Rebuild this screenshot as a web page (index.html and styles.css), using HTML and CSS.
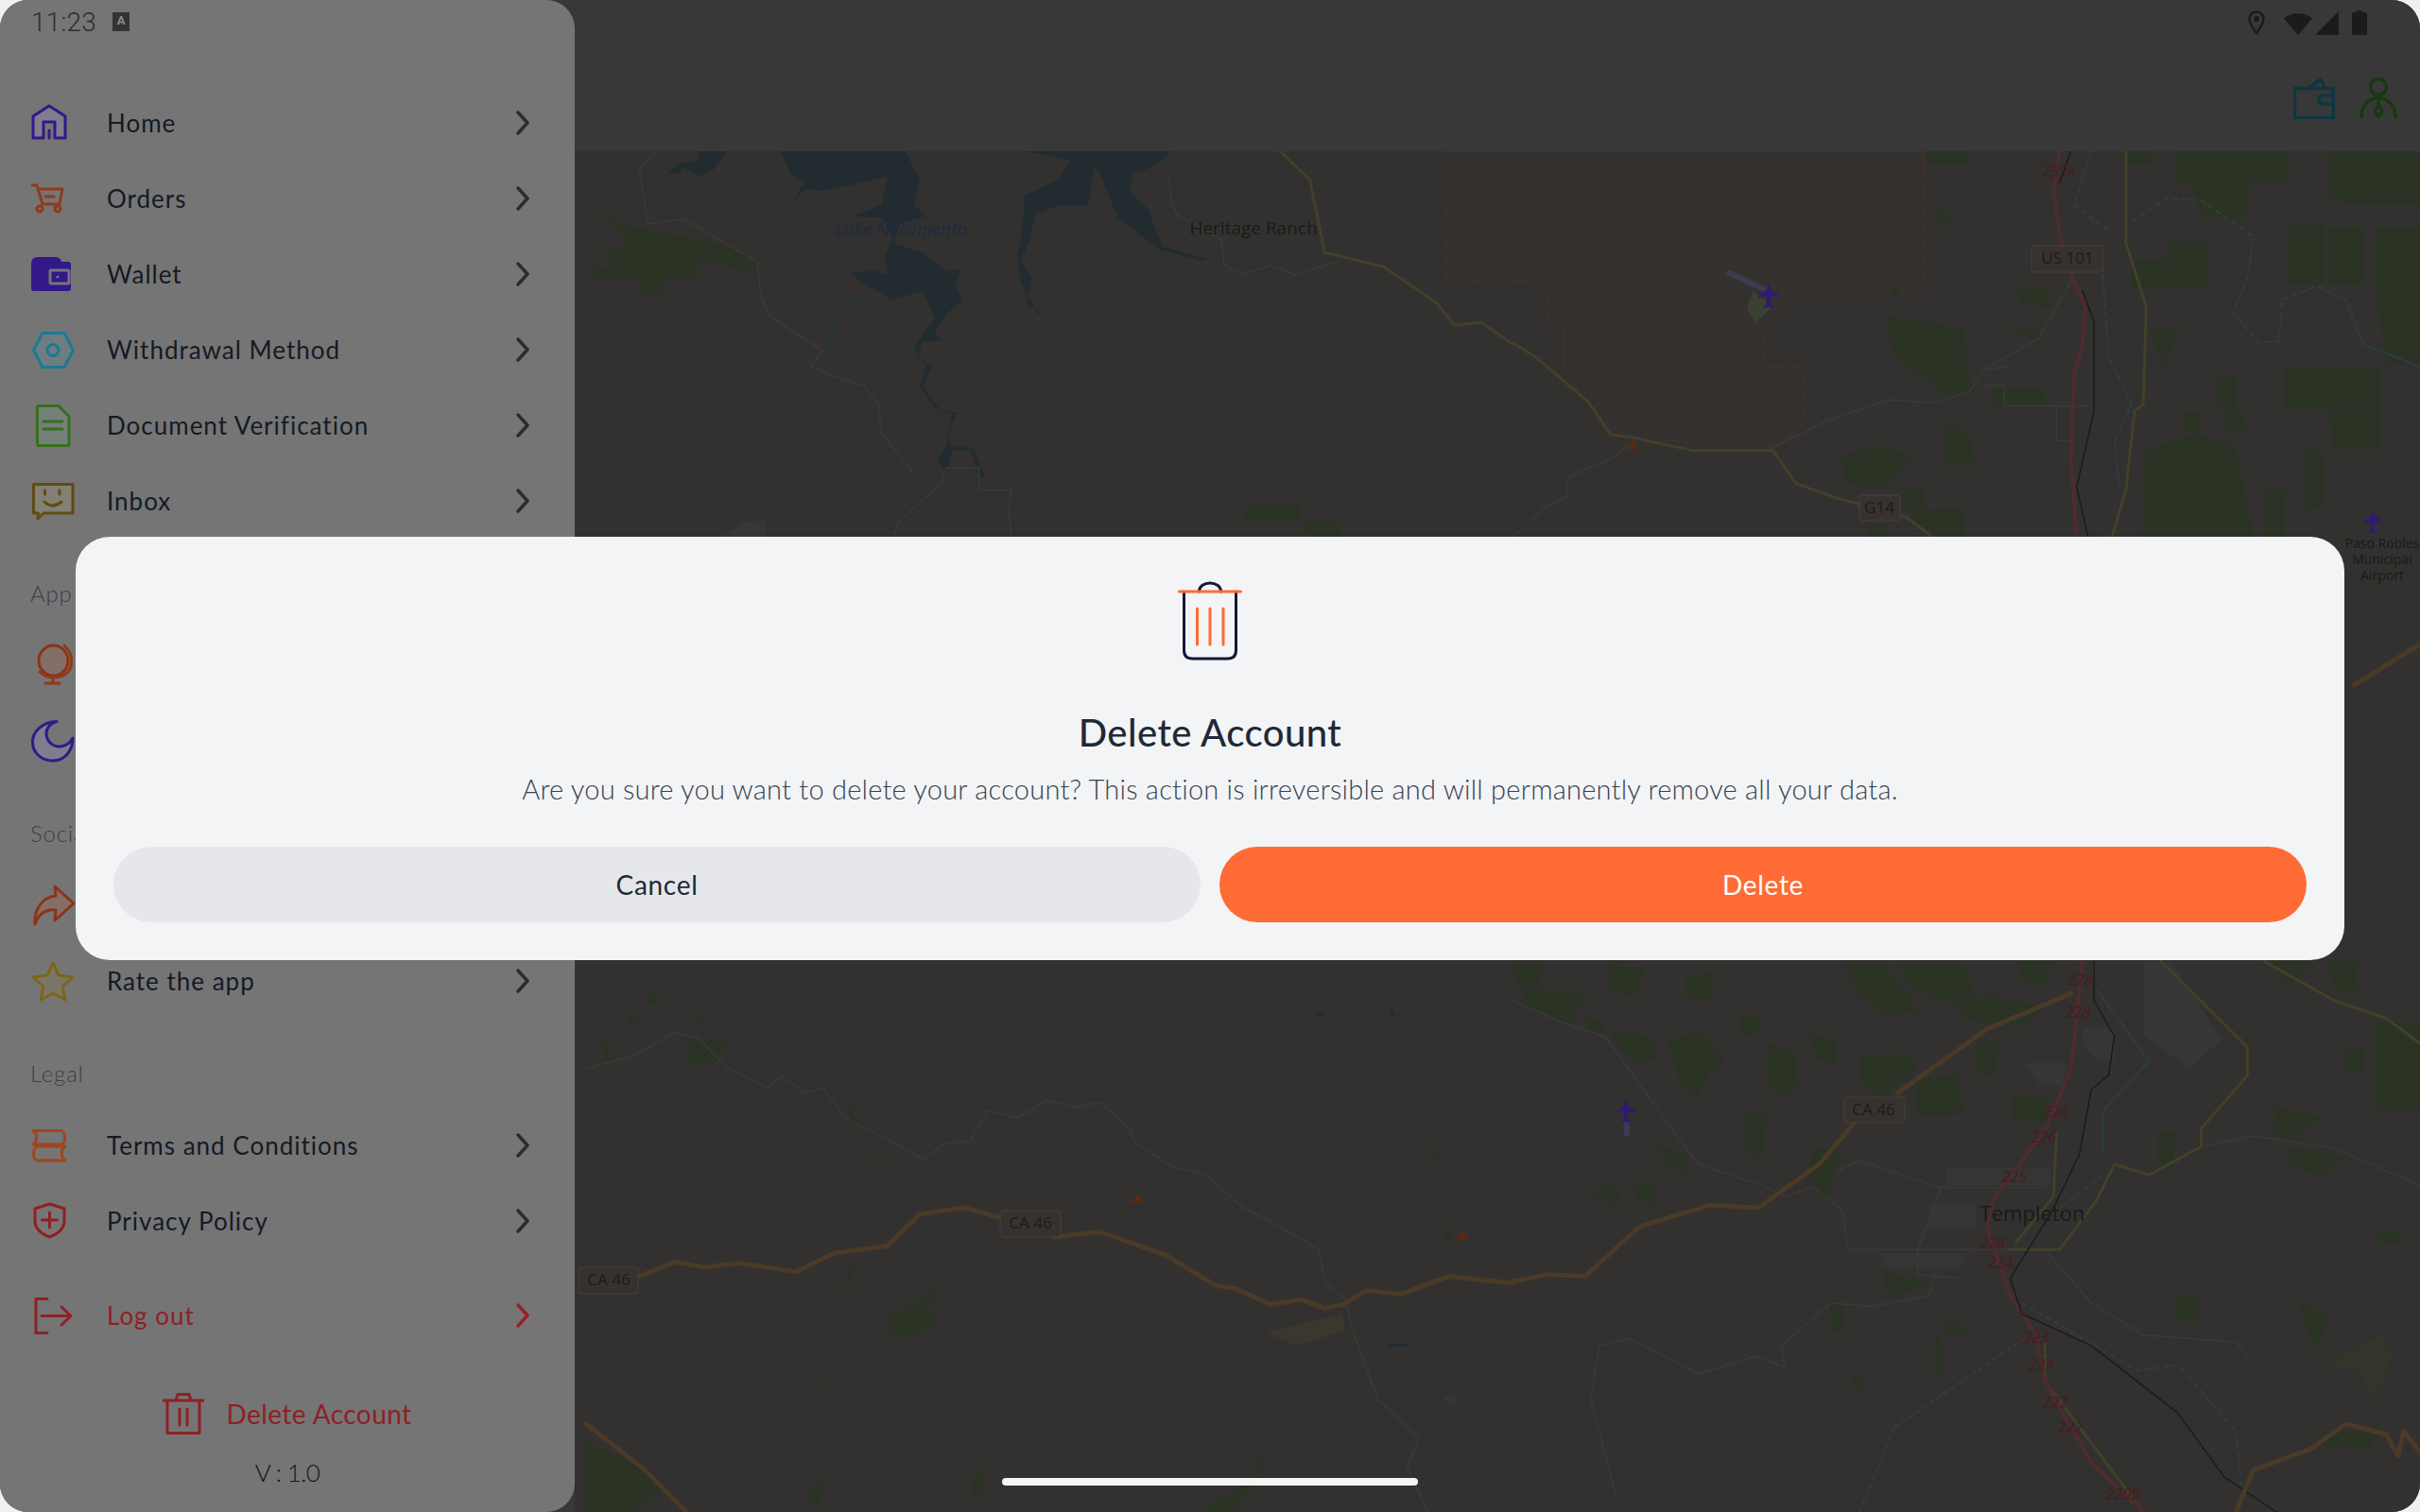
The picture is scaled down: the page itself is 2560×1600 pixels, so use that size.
FILE: index.html
```html
<!DOCTYPE html>
<html lang="en">
<head>
  <meta charset="UTF-8">
  <meta name="viewport" content="width=device-width, initial-scale=1.0">
  <title>Delete Account</title>
  <link rel="stylesheet" href="styles.css">
</head>
<body>
  <div class="screen">

    <aside class="drawer">
      <div class="status-left">
        <span class="clock">11:23</span>
        <span class="keyboard-badge">A</span>
      </div>

      <nav class="menu">
        <a class="row">
          <svg class="ico" viewBox="0 0 48 48"><path class="tint-purple" d="M3 40V17L20 6l17 11v23H26V23H14v17z"/><path class="st-purple" d="M20 32v8" stroke-width="4"/></svg>
          <span class="row-text">Home</span>
          <svg class="chev" viewBox="0 0 14 26"><path d="M2 2l10 11L2 24"/></svg>
        </a>
        <a class="row">
          <svg class="ico" viewBox="0 0 48 48"><path class="st-rust" d="M2 10h5l6 20h18l3-16H9M16 22h9"/><circle class="st-rust" cx="10" cy="35" r="3"/><circle class="st-rust" cx="29" cy="35" r="3"/></svg>
          <span class="row-text">Orders</span>
          <svg class="chev" viewBox="0 0 14 26"><path d="M2 2l10 11L2 24"/></svg>
        </a>
        <a class="row">
          <svg class="ico" viewBox="0 0 48 48"><path class="fill-purple" d="M1 13q0-7 7-7h18q6 0 7 5h7q3 0 3 3v25q0 3-3 3H4q-3 0-3-3z"/><rect class="st-grey" x="21" y="20" width="20" height="14" rx="1"/><circle class="dot-grey" cx="29" cy="27" r="1.6"/></svg>
          <span class="row-text">Wallet</span>
          <svg class="chev" viewBox="0 0 14 26"><path d="M2 2l10 11L2 24"/></svg>
        </a>
        <a class="row">
          <svg class="ico" viewBox="0 0 48 48"><path class="tint-teal" d="M3.500 24.500L13 6.500h23l9.500 18L36 42.500H13z"/><circle class="st-teal" cx="24" cy="24.500" r="6"/></svg>
          <span class="row-text">Withdrawal Method</span>
          <svg class="chev" viewBox="0 0 14 26"><path d="M2 2l10 11L2 24"/></svg>
        </a>
        <a class="row">
          <svg class="ico" viewBox="0 0 48 48"><path class="tint-green" d="M7.500 5q0-1.500 1.500-1.500h21L41 15v29q0 1.500-1.500 1.500H9q-1.500 0-1.500-1.500z"/><path class="st-green" d="M14 20h20M14 28h20"/></svg>
          <span class="row-text">Document Verification</span>
          <svg class="chev" viewBox="0 0 14 26"><path d="M2 2l10 11L2 24"/></svg>
        </a>
        <a class="row">
          <svg class="ico" viewBox="0 0 48 48"><path class="tint-olive" d="M3.500 6.500H45V37H14l-6 6 .5-6h-5z"/><path class="st-olive" d="M15.500 13v4M31 13v4M15 25q8.500 8 18 0"/></svg>
          <span class="row-text">Inbox</span>
          <svg class="chev" viewBox="0 0 14 26"><path d="M2 2l10 11L2 24"/></svg>
        </a>

        <p class="section-label">App Settings</p>
        <a class="row">
          <svg class="ico" viewBox="0 0 48 48"><ellipse class="tint-rust" cx="24.500" cy="19" rx="15.500" ry="16"/><path class="st-rust" d="M36 3c11 10 11 29-5 33-8 2-16 0-21-5M24 37v6M16 43h15"/></svg>
          <span class="row-text">Language</span>
          <svg class="chev" viewBox="0 0 14 26"><path d="M2 2l10 11L2 24"/></svg>
        </a>
        <a class="row">
          <svg class="ico" viewBox="0 0 48 48"><path class="tint-purple" d="M28 3.500C12 4 2.500 15 2.500 25c0 12 9.500 20 21.500 20s21-10 21-24c-3 6-9 9-14 9-8 0-14-6-14-14 0-6 5-11 11-12.500z"/></svg>
          <span class="row-text">Dark Mode</span>
          <svg class="chev" viewBox="0 0 14 26"><path d="M2 2l10 11L2 24"/></svg>
        </a>

        <p class="section-label">Social</p>
        <a class="row">
          <svg class="ico" viewBox="0 0 48 48"><path class="tint-rust" d="M26 4l20 18-20 18 1-11c-10-1-18 4-22 15-1-16 8-29 22-30z"/></svg>
          <span class="row-text">Share the app</span>
          <svg class="chev" viewBox="0 0 14 26"><path d="M2 2l10 11L2 24"/></svg>
        </a>
        <a class="row">
          <svg class="ico" viewBox="0 0 48 48"><path class="tint-gold" d="M24 5l6 13 15 2-11 10 3 14-13-7-13 7 3-14L3 20l15-2z"/></svg>
          <span class="row-text">Rate the app</span>
          <svg class="chev" viewBox="0 0 14 26"><path d="M2 2l10 11L2 24"/></svg>
        </a>

        <p class="section-label">Legal</p>
        <a class="row">
          <svg class="ico" viewBox="0 0 48 48"><path class="st-orange" d="M3 8.500h29c6 0 6 14.500 0 14.500H3c5-4 5-11 0-14.500zM37 25H8c-6 0-6 15 0 15h29c-5-4-5-11 0-15z"/></svg>
          <span class="row-text">Terms and Conditions</span>
          <svg class="chev" viewBox="0 0 14 26"><path d="M2 2l10 11L2 24"/></svg>
        </a>
        <a class="row">
          <svg class="ico" viewBox="0 0 48 48"><path class="st-red" d="M20.500 6L36 11v13c0 9-8 14-15.500 17C13 38 5 33 5 24V11zM20.500 15v16M12.500 23h16"/></svg>
          <span class="row-text">Privacy Policy</span>
          <svg class="chev" viewBox="0 0 14 26"><path d="M2 2l10 11L2 24"/></svg>
        </a>
        <a class="row row-logout">
          <svg class="ico" viewBox="0 0 48 48"><path class="st-red" d="M18 6.500H6v36h12M12 24.500h30M33 15l10 9.500L33 34"/></svg>
          <span class="row-text">Log out</span>
          <svg class="chev" viewBox="0 0 14 26"><path d="M2 2l10 11L2 24"/></svg>
        </a>
      </nav>

      <div class="drawer-foot">
        <div class="delete-link">
          <svg class="ico-trash" viewBox="0 0 44 44"><path class="st-red" d="M0 8h44M5 8v34.500h34V8M14 8l2-6.500h12L30 8M18 17v17M26 17v17"/></svg>
          <span>Delete Account</span>
        </div>
        <div class="version">V : 1.0</div>
      </div>
    </aside>

    <main class="content">
      <header class="appbar">
        <div class="status-right">
          <svg class="sys-pin" viewBox="0 0 18 26"><path d="M9 1.500c-4.200 0-7.500 3.300-7.500 7.500 0 5 7.500 15 7.500 15s7.500-10 7.500-15c0-4.200-3.300-7.500-7.500-7.500z"/><circle cx="9" cy="9" r="3"/></svg>
          <svg class="sys-wifi" viewBox="0 0 30 25"><path d="M0 7.500C8 .5 22 .5 30 7.500L15 25z"/></svg>
          <svg class="sys-signal" viewBox="0 0 25 25"><path d="M25 0v25H0z"/></svg>
          <svg class="sys-battery" viewBox="0 0 16 26"><path d="M5 0h6v2h3q2 0 2 2v20q0 2-2 2H2q-2 0-2-2V4q0-2 2-2h3z"/></svg>
        </div>
        <div class="appbar-actions">
          <svg class="act-wallet" viewBox="0 0 44 44"><path d="M1.500 11.500h41v31h-41zM16 11.500L29 2l5 9.500"/><path d="M42.500 19H31q-4 0-4 4.500T31 28h11.500"/></svg>
          <svg class="act-person" viewBox="0 0 40 44"><circle cx="20" cy="10" r="8.500"/><path d="M2 42c0-27 36-27 36 0M20 24v6M20 29l-4 7 4 5 4-5-4-7z"/></svg>
        </div>
      </header>

      <svg class="map" viewBox="608 160 1952 1440">
        <defs>
          <pattern id="hatch" width="10" height="10" patternUnits="userSpaceOnUse" patternTransform="rotate(-52)">
            <rect class="hatch-base" width="10" height="10"/>
            <path class="hatch-line" d="M0 5h10"/>
          </pattern>
          <symbol id="plane" viewBox="0 0 20 28">
            <path class="plane-path" d="M10 0l2 8 8 6v2l-8-2v8l3 3v1l-5-1-5 1v-1l3-3v-8l-8 2v-2l8-6z"/>
          </symbol>
        </defs>

        <path class="hatched" d="M1529 160H2036V305H1912L1865 347V388H1908V451L1875 473 1800 470 1701 458 1655 391V341H1638V299H1529z"/>

        <!-- north west: lake -->
        <g transform="translate(620 150) scale(.625 .335)">
          <path class="lake" d="M330 30H540L565 120 555 200 575 235 530 260 520 320 570 350 612 410 635 400 625 450 638 500 612 540 590 600 600 630 570 630 560 680 585 710 570 770 600 850 630 855 612 920 620 965 655 965 675 1060 665 1060 650 975 620 975 610 1050 595 1010 610 960 620 860 590 840 565 770 575 710 555 650 570 610 590 560 570 470 520 500 490 470 445 415 490 405 510 420 505 360 520 300 500 240 450 235 500 200 510 110 440 140 400 155 370 150 345 200 370 130 345 100z"/>
          <path class="lake" d="M745 30H990L960 80 925 100 920 160 950 210 975 330 1050 370 1045 376 970 340 900 240 870 100 860 80 850 200 800 200 760 230 750 320 735 370 755 430 745 510 770 540 765 545 735 440 730 370 742 220 740 170 800 120 820 60z"/>
          <path class="lake" d="M190 30H238L215 90 190 110 165 80 155 100 140 100 155 70 190 60z"/>
          <path class="brook" d="M480 480C440 510 420 530 425 570L412 660"/>
          <path class="wood" d="M25 230L60 260 100 280 130 290 200 310 250 340 290 390 275 410 220 380 180 380 190 430 130 430 125 480 100 480 85 430 10 430 15 400 50 400 30 350 70 320 60 290z"/>
          <path class="wood" d="M1110 1195L1125 1150 1210 1145 1205 1195 1270 1200 1278 1254H1225L1210 1195z"/>
          <path class="rock" d="M220 1254L270 1200 305 1195V1254z"/>
          <path class="trail" d="M115 35L90 90 105 260 165 245 240 325 290 380 295 480 310 550 400 660 380 710 410 735 470 770 495 830 500 920 560 1060M610 1030H665V1100H720L715 1150 720 1254M610 1030L600 1080 570 1130 530 1200 520 1254M985 100L990 180 1000 230 1075 310 1080 390 1110 420 1160 390 1200 420 1270 380"/>
          <path class="thin" d="M650 60L680 180 660 330 680 510 655 580 695 650 700 740 670 780 750 990 720 1100M340 100L330 220 380 350 430 480 410 560 430 680 360 780 410 830 430 920 470 1080 540 1130M1160 130L1170 200 1120 260 1080 300M1420 100L1410 300 1420 400"/>
          <path class="state" d="M1175 30L1225 120 1250 350 1350 395 1440 510 1470 580 1515 570 1568 640"/>
        </g>

        <!-- north east: farmland and the 101 -->
        <g transform="translate(1600 150) scale(.6122 .335)">
          <path class="wood" d="M1145 30H1340V130H1270V240H1190L1170 130H1145zM1410 30H1568V200H1470L1410 180zM1340 265H1400V450H1340zM1410 270H1470V450H1410zM1130 320H1200V460H1070V370H1130zM1490 270H1568V700H1510L1490 450zM1335 715H1500V970H1420L1410 845H1335zM1100 590H1150L1130 710 1110 640zM1220 740H1250V850H1220zM1155 850H1190V910H1160zM1230 850H1265V910H1235zM1090 980L1180 920 1250 970 1280 1250H1090zM1300 1100H1335V1250H1300zM1370 970H1400V1160H1370zM645 550L780 590 785 720 800 790 750 810 720 750 660 680zM570 990L640 960 690 1000 640 1090 575 1080zM750 880L790 930 800 1020 745 1025zM830 780H920V835H830zM865 455L925 460 930 530 900 510 880 510zM860 580L910 590 905 630zM680 1090H710V1160H780V1250H720L680 1160zM715 30H785V70H715zM735 200L765 265 735 260zM1065 30H1105V70H1065zM650 460H670L660 495zM615 1210H645V1254H615z"/>
          <path class="trail" d="M450 965L540 885 650 815 725 825 790 790 815 720 860 710M815 720L910 620 965 440M815 770H850V835H1000M940 840V945H965M0 1250L60 1150 95 1120 95 1060 170 1000 200 960"/>
          <path class="thin" d="M100 30L140 180 210 420 340 570H380V650L430 710 500 900M280 30L270 200 290 280 340 290 380 250M285 280V320L370 400 380 580M510 470V570H575V690L640 700V900M575 1000H720V1254M1060 850H1568M740 100L790 210 800 340 860 360"/>
          <path class="creek" d="M1070 250L1130 180 1190 185 1280 300 1270 430 1245 540 1290 635 1325 630 1330 500 1390 455 1440 500M1000 30L970 200 1030 280M1020 420L1030 680 1070 830 1040 950 1050 1100"/>
          <path class="river" d="M1440 500L1470 640 1568 710"/>
          <path class="state" d="M1060 30V320L1095 520 1090 830 1075 850 1060 1100 1035 1254M0 635L40 680 130 820 170 925 210 935 310 975H450L490 1080 560 1125 680 1185 730 1254"/>
          <path class="us" d="M945 30L935 150 945 290 965 420 990 520 985 640 970 740 965 1000 975 1254"/>
          <path class="rail" d="M965 30L945 130M985 470L1005 570V850L975 1090 995 1254"/>
          <path class="runway" d="M375 415L445 475"/>
          <path class="wood-soft" d="M415 470L450 520 420 570 405 530z"/>
          <path class="peak" d="M208 940L218 972H198z"/>
        </g>

        <!-- south middle: CA 46 -->
        <g transform="translate(620 1010) scale(.625 .3763)">
          <path class="wood" d="M0 1370L100 1450 130 1500 80 1568H0zM510 1030L540 1000 600 930 570 1000 600 1030 545 1080 515 1060zM435 920L460 860 445 925zM30 250H40V300H30zM70 160L95 195H75zM175 190L205 170 190 195zM175 240L240 240 215 310 175 310zM445 420L460 470 445 470zM490 585L505 545 495 590zM395 1195L425 1170 400 1200zM650 1500L670 1440 675 1490 655 1530zM1045 1568L1130 1470 1140 1400 1145 1470 1090 1568zM1450 770L1470 790 1455 810zM1430 540L1445 560 1435 575zM370 1520L400 1480 395 1560zM100 110H120V140H105z"/>
          <path class="farm" d="M1150 1065L1280 1010 1285 1060 1230 1085 1200 1098z"/>
          <path class="lake" d="M1360 1095H1390V1103H1360zM1230 160L1250 170 1240 178zM1360 140L1372 172 1362 170z"/>
          <path class="trail" d="M0 320L80 285 150 220 190 235 240 320 310 375 330 340 370 390 400 375 440 460 500 510 570 575 610 530 650 525 680 440 730 460 780 410 830 430 870 415 920 490 930 530 990 595 1050 620 1110 710 1190 780 1240 830 1250 920 1285 970 1300 1070 1340 1250 1410 1360 1390 1440 1425 1568"/>
          <path class="thin" d="M760 670L800 630 810 720 880 750 970 790M145 570L140 830 70 990M1380 490L1480 660 1568 780M1360 610L1400 850 1440 880M60 1370L85 1305 140 1350 130 1410M165 1270L240 1170M760 1270L750 1450"/>
          <path class="ca" d="M90 905L150 865 200 880 260 868 355 892 420 840 510 820 565 730 640 712 700 740M790 795L870 780 980 845 1065 930 1100 940 1160 985 1210 970 1250 995 1280 985 1320 945 1380 955 1460 905 1568 925M0 1320L100 1450 170 1568"/>
          <path class="peak" d="M933 672L943 698H923zM1483 776L1493 802H1473z"/>
          <path class="rock" d="M1450 1245L1465 1240 1474 1255 1460 1265z"/>
        </g>

        <!-- south east: Templeton -->
        <g transform="translate(1600 1010) scale(.6122 .3763)">
          <path class="wood" d="M20 100H130L100 195 30 150zM0 30H60L40 90H10zM125 170L160 200 155 230 130 220zM165 30L230 40 210 120 170 100zM300 60L350 50 340 130 300 120zM165 215L230 230 250 290 215 310zM270 240L330 220 365 300 340 330 320 400 290 370zM395 170H430L420 230 395 225zM440 250L490 280V360L470 400 440 370zM515 230L560 240 555 310 525 290zM570 30H640L680 100 700 160 640 170 600 110zM665 30H780L800 120 740 130 690 90zM760 130L830 120 920 150 880 200 820 190 780 180zM600 290L680 280 700 320 640 400 600 350zM700 350L770 340 780 450H700zM800 260L840 240 835 340 800 330zM865 395L925 400 920 470H865zM405 450L440 440 430 580 400 540zM250 540L300 560V610L270 600zM520 540L570 560 540 690 510 620zM210 640H245V700L215 690zM135 690L170 640 190 700zM640 890L720 930 650 960zM1115 500H1145L1140 600 1115 590zM1340 540L1440 570 1400 620 1340 590zM1320 430L1400 460 1340 520 1315 490zM1490 190H1568V440H1490zM1440 265H1470V330H1440zM1405 20H1460V110H1430zM550 980H570V1060H550zM730 1060L750 1150 730 1190zM740 1010L785 1060 750 1070zM590 1180L610 1200 600 1220 585 1210zM1360 970L1410 1030 1390 1110 1370 1040zM1145 960H1185V1030H1145zM1495 780H1535V810H1495zM1390 1350L1500 1330 1480 1390 1400 1380zM880 20H930L920 90 880 70zM1310 20H1380L1340 90z"/>
          <path class="rock" d="M1090 20H1140L1225 240 1170 320 1090 230zM985 205H1040V300H1010L985 250zM885 305H960L950 370 910 365z"/>
          <path class="scrub" d="M1395 1150L1500 1070 1520 1130 1490 1250 1460 1170z"/>
          <path class="town" d="M750 600H930V650H750zM720 700H800V770H720zM640 840H780V880H640z"/>
          <path class="trail" d="M0 130L100 200 160 230 320 590 430 650 470 680 520 655 570 720 580 830H920M560 610L600 580 740 655H920M920 830L1000 980 1090 1070 1250 1090 1270 1130M1190 540L1280 510 1420 545 1568 650M740 660L700 830 700 900 770 910M730 900L720 960 620 990 550 980 465 1100 470 1160 420 1130 320 1180 240 1110 200 1080 150 1100 135 1250 180 1530"/>
          <path class="thin" d="M420 1280L520 1400 480 1560M1090 1430L1170 1290 1230 1450M1180 1340L1150 1450M800 220L760 530M120 930L200 1050M1220 860L1230 1100M1070 350L1150 350V470"/>
          <path class="dash" d="M660 1330L880 1085M600 1568L660 1330"/>
          <path class="river" d="M1010 100L1100 300 1020 440 1020 560"/>
          <path class="creek" d="M880 980L1080 1170 1150 1155 1250 1340 1260 1500M1020 620L940 720"/>
          <path class="state" d="M1120 20L1270 260V340L1190 490V540L1100 620 1040 590 1010 690 945 830H860M940 500L935 680 870 810M920 1090V1200L1090 1568M1300 20L1420 130 1510 180 1568 250"/>
          <path class="us" d="M985 20L965 320 925 480 830 690 820 770 860 960 905 1070 920 1200 1000 1430 1090 1568"/>
          <path class="rail" d="M1005 20V130L1040 230 1030 340 1000 380 980 560 930 730 860 910 880 1010 1000 1100 1150 1290 1230 1470 1320 1568"/>
          <path class="ca" d="M0 920L60 900 125 905 220 765 340 705 425 712 530 590 590 475M665 390L820 210 965 110M1250 1568L1280 1450 1380 1390 1440 1320 1510 1350 1530 1410 1540 1340 1568 1400"/>
          <path class="runway" d="M197 470V505"/>
        </g>

        <path class="ca" d="M2490 725L2560 682"/>

        <use href="#plane" x="1860" y="298" width="22" height="30"/>
        <use href="#plane" x="1710" y="1162" width="20" height="28"/>
        <use href="#plane" x="2499" y="538" width="22" height="28"/>

        <text class="place water" x="953" y="249">Lake Nacimiento</text>
        <text class="place" x="1326" y="248">Heritage Ranch</text>
        <text class="place town-name" x="2150" y="1292">Templeton</text>
        <text class="place small" x="2520" y="580">Paso Robles</text>
        <text class="place small" x="2520" y="597">Municipal</text>
        <text class="place small" x="2520" y="614">Airport</text>

        <rect class="sign" x="2149" y="260" width="76" height="28" rx="3"/>
        <text class="sign-text" x="2187" y="279">US 101</text>
        <rect class="sign" x="1967" y="524" width="43" height="27" rx="3"/>
        <text class="sign-text" x="1988" y="543">G14</text>
        <rect class="sign" x="1058" y="1281" width="64" height="28" rx="3"/>
        <text class="sign-text" x="1090" y="1300">CA 46</text>
        <rect class="sign" x="612" y="1341" width="63" height="28" rx="3"/>
        <text class="sign-text" x="644" y="1360">CA 46</text>
        <rect class="sign" x="1951" y="1161" width="64" height="27" rx="3"/>
        <text class="sign-text" x="1982" y="1180">CA 46</text>

        <text class="exit" x="2178" y="187">239A</text>
        <text class="exit" x="2200" y="1043">228</text>
        <text class="exit" x="2198" y="1077">228</text>
        <text class="exit" x="2175" y="1182">226</text>
        <text class="exit" x="2162" y="1209">226</text>
        <text class="exit" x="2131" y="1251">225</text>
        <text class="exit" x="2108" y="1321">224</text>
        <text class="exit" x="2116" y="1342">224</text>
        <text class="exit" x="2154" y="1421">223</text>
        <text class="exit" x="2159" y="1450">223</text>
        <text class="exit" x="2174" y="1490">222</text>
        <text class="exit" x="2190" y="1516">222</text>
        <text class="exit" x="2246" y="1587">220B</text>
      </svg>
    </main>

    <section class="dialog">
      <svg class="dialog-icon" viewBox="0 0 68 86">
        <path class="bin-dark" d="M22.500 12C22.500 0 45.500 0 45.500 12M6.500 12v62q0 9 9 9h37q9 0 9-9V12"/>
        <path class="bin-lid" d="M1.500 12h65M20.500 30v38M34 30v38M48 30v38"/>
      </svg>
      <h2 class="dialog-title">Delete Account</h2>
      <p class="dialog-text">Are you sure you want to delete your account? This action is irreversible and will permanently remove all your data.</p>
      <div class="dialog-actions">
        <button class="btn btn-cancel">Cancel</button>
        <button class="btn btn-delete">Delete</button>
      </div>
    </section>

    <div class="home-bar"></div>
  </div>
</body>
</html>
```

FILE: styles.css
```css
* {
  box-sizing: border-box;
}
html, body {
  margin: 0;
  background-color: #f0f0f0;
}
body {
  width: 2560px;
  height: 1600px;
  overflow: hidden;
  font-family: "Lato", "Noto Sans", sans-serif;
}
.screen {
  position: relative;
  display: flex;
  width: 2560px;
  height: 1600px;
  overflow: hidden;
  border-radius: 30px;
  background-color: #383838;
}

/* drawer */
.drawer {
  display: flex;
  flex-direction: column;
  flex: none;
  width: 608px;
  height: 1600px;
  background-color: #757575;
  border-radius: 0 30px 30px 0;
}
.status-left {
  display: flex;
  align-items: center;
  gap: 17px;
  height: 46px;
  padding-left: 33px;
}
.clock {
  font-family: "Roboto", sans-serif;
  font-size: 28px;
  font-weight: 300;
  letter-spacing: .2px;
  color: #2e2e2e;
}
.keyboard-badge {
  display: flex;
  justify-content: center;
  width: 18px;
  height: 20px;
  background-color: #333333;
  color: #8c8c8c;
  font-family: "Roboto", sans-serif;
  font-size: 13px;
  font-weight: 700;
  line-height: 17px;
}
.menu {
  display: flex;
  flex-direction: column;
  padding-top: 44px;
}
.row {
  display: flex;
  align-items: center;
  flex: none;
  height: 80px;
  padding: 0 48px 0 32px;
  color: #141a24;
}
.row-text {
  font-size: 26px;
  letter-spacing: 1px;
}
.ico {
  flex: none;
  width: 48px;
  height: 48px;
  margin-right: 33px;
}
.chev {
  flex: none;
  width: 14px;
  height: 26px;
  margin-left: auto;
}
.chev path {
  fill: none;
  stroke: #2b2c32;
  stroke-width: 3.5;
  stroke-linecap: round;
  stroke-linejoin: round;
}
.row-logout {
  margin-top: 20px;
  color: #8f1f24;
}
.row-logout .chev path {
  stroke: #97202a;
}
.section-label {
  height: 32px;
  margin: 42px 0 20px;
  padding-left: 32px;
  font-size: 24px;
  font-weight: 300;
  line-height: 32px;
  letter-spacing: .8px;
  color: #3b3f49;
}
.drawer-foot {
  display: flex;
  flex-direction: column;
  align-items: center;
  padding-top: 42px;
}
.delete-link {
  display: flex;
  align-items: center;
  gap: 23px;
  height: 44px;
  font-size: 28px;
  letter-spacing: .45px;
  color: #8f1f24;
}
.ico-trash {
  width: 44px;
  height: 44px;
}
.version {
  margin-top: 24px;
  font-size: 26px;
  font-weight: 300;
  line-height: 32px;
  letter-spacing: -.6px;
  color: #10141d;
}

/* icon strokes */
.st-rust, .st-orange, .st-red, .st-green, .st-olive, .st-teal, .st-purple, .st-grey,
.tint-purple, .tint-teal, .tint-green, .tint-olive, .tint-rust, .tint-gold {
  stroke-width: 3;
  stroke-linejoin: round;
  stroke-linecap: round;
}
.st-rust, .st-orange, .st-red, .st-green, .st-olive, .st-teal, .st-purple, .st-grey {
  fill: none;
}
.st-rust { stroke: #8f3a1c; }
.st-orange { stroke: #a0451f; }
.st-red { stroke: #8f2025; }
.st-green { stroke: #356f1e; }
.st-olive { stroke: #5f4c14; }
.st-teal { stroke: #1a7a96; }
.st-purple { stroke: #33188a; }
.st-grey { stroke: #757575; }
.fill-purple { fill: #33188a; }
.dot-grey { fill: #757575; }
.tint-purple { fill: #7f7d8d; stroke: #33188a; }
.tint-teal { fill: #6f7c82; stroke: #1a7a96; }
.tint-green { fill: #75807a; stroke: #356f1e; }
.tint-olive { fill: #827f74; stroke: #5f4c14; }
.tint-rust { fill: #846e68; stroke: #8b3417; }
.tint-gold { fill: #7b7768; stroke: #7d6518; }

/* top bar */
.content {
  display: flex;
  flex-direction: column;
  flex: 1;
  min-width: 0;
}
.appbar {
  display: flex;
  flex-direction: column;
  align-items: flex-end;
  flex: none;
  height: 160px;
  background-color: #383838;
}
.status-right {
  display: flex;
  align-items: center;
  height: 48px;
  padding-right: 56px;
}
.sys-pin {
  width: 18px;
  height: 26px;
  margin-right: 20px;
}
.sys-pin path {
  fill: none;
  stroke: #1b1b1b;
  stroke-width: 2.500;
}
.sys-pin circle, .sys-wifi, .sys-signal, .sys-battery {
  fill: #1b1b1b;
}
.sys-wifi {
  width: 30px;
  height: 25px;
  margin-right: 3px;
}
.sys-signal {
  width: 25px;
  height: 25px;
  margin-right: 14px;
}
.sys-battery {
  width: 16px;
  height: 26px;
}
.appbar-actions {
  display: flex;
  gap: 26px;
  padding: 34px 24px 0 0;
}
.act-wallet, .act-person {
  height: 44px;
  fill: none;
  stroke-width: 3.500;
  stroke-linejoin: round;
  stroke-linecap: round;
}
.act-wallet {
  width: 44px;
  stroke: #0f3540;
}
.act-person {
  width: 40px;
  stroke: #17390f;
}

/* map */
.map {
  display: block;
  flex: none;
  width: 1952px;
  height: 1440px;
  background-color: #32312f;
}
.map path {
  fill: none;
  vector-effect: non-scaling-stroke;
  stroke-linejoin: round;
  stroke-linecap: round;
}
.map .lake { fill: #222c30; }
.map .wood { fill: #2a3324; }
.map .wood-soft { fill: #3a4032; }
.map .rock { fill: #363636; }
.map .farm { fill: #3b362e; }
.map .scrub { fill: #33342a; }
.map .town { fill: #353534; }
.map .peak { fill: #5a2a12; }
.map .plane-path { fill: #2f1a73; }
.map .hatched {
  fill: url(#hatch);
  stroke: #42302f;
  stroke-width: 1.5;
}
.hatch-base {
  fill: #33312f;
}
.map .hatch-line {
  vector-effect: none;
  stroke: #3a302f;
  stroke-width: 1.5;
}
.map .trail {
  stroke: #3b3a39;
  stroke-width: 1.5;
}
.map .thin {
  stroke: #363534;
  stroke-width: 1;
}
.map .dash {
  stroke: #3d3c3b;
  stroke-width: 1.5;
  stroke-dasharray: 5 4;
}
.map .brook {
  stroke: #26353b;
  stroke-width: 3;
}
.map .river {
  stroke: #2b3d44;
  stroke-width: 2;
}
.map .creek {
  stroke: #2c3f45;
  stroke-width: 2;
  stroke-dasharray: 5 5;
}
.map .state {
  stroke: #41412a;
  stroke-width: 3;
}
.map .ca {
  stroke: #4a3a28;
  stroke-width: 5;
}
.map .us {
  stroke: #4d2b2e;
  stroke-width: 4;
}
.map .rail {
  stroke: #1b1b1d;
  stroke-width: 1.5;
}
.map .runway {
  stroke: #3d3b52;
  stroke-width: 6;
}
.place {
  font-family: "Open Sans", sans-serif;
  font-size: 19px;
  text-anchor: middle;
  fill: #1a1a19;
}
.place.water {
  font-style: italic;
  fill: #1c2b40;
}
.place.town-name {
  font-size: 22px;
}
.place.small {
  font-size: 14px;
}
.sign {
  fill: #38322f;
  stroke: #4a3f3a;
}
.sign-text {
  font-family: "Open Sans", sans-serif;
  font-size: 17px;
  text-anchor: middle;
  fill: #1c1b1a;
}
.exit {
  font-family: "Open Sans", sans-serif;
  font-size: 16px;
  font-style: italic;
  text-anchor: middle;
  fill: #4a1a1f;
}

/* dialog */
.dialog {
  position: absolute;
  top: 568px;
  left: 80px;
  display: flex;
  flex-direction: column;
  align-items: center;
  width: 2400px;
  height: 448px;
  padding: 46px 40px 40px;
  background-color: #f3f4f6;
  border-radius: 36px;
}
.dialog-icon {
  flex: none;
  width: 68px;
  height: 86px;
}
.dialog-icon path {
  fill: none;
  stroke-linecap: round;
  stroke-width: 3;
}
.dialog-icon .bin-dark {
  stroke: #17173a;
}
.dialog-icon .bin-lid {
  stroke: #ff6b35;
}
.dialog-title {
  margin: 51px 0 0;
  font-size: 40px;
  font-weight: 500;
  line-height: 48px;
  letter-spacing: .45px;
  color: #1f2937;
}
.dialog-text {
  margin: 18px 0 0;
  font-size: 29px;
  font-weight: 300;
  line-height: 36px;
  letter-spacing: .23px;
  color: #374151;
}
.dialog-actions {
  display: flex;
  gap: 20px;
  width: 100%;
  margin-top: 43px;
}
.btn {
  flex: 1;
  height: 80px;
  border: none;
  border-radius: 40px;
  font-family: inherit;
  font-size: 28px;
  letter-spacing: .7px;
}
.btn-cancel {
  background-color: #e5e7eb;
  color: #1f2937;
}
.btn-delete {
  background-color: #ff6b35;
  color: #ffffff;
}

.home-bar {
  position: absolute;
  left: 1060px;
  bottom: 28px;
  width: 440px;
  height: 8px;
  background-color: #f5f5f5;
  border-radius: 4px;
}
```
